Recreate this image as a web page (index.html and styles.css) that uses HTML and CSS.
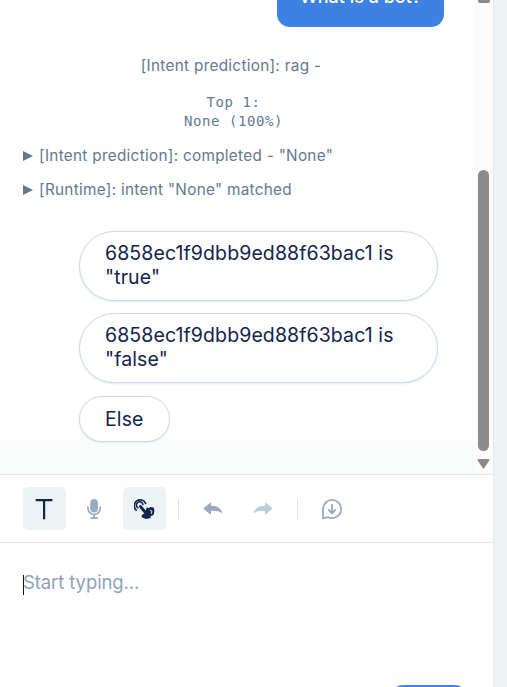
FILE: index.html
```html
<!DOCTYPE html>
<html lang="en">
<head>
  <meta charset="UTF-8">
  <title>Debug Chat</title>
  <link rel="stylesheet" href="styles.css">
</head>
<body>
<div class="panel">
  <div class="chat">
    <div class="messages">
      <div class="bubble">What is a bot?</div>
      <div class="log log-center">[Intent prediction]: rag -</div>
      <pre class="scores">Top 1:
None (100%)</pre>
      <div class="log log-row"><i class="marker"></i><span>[Intent prediction]: completed - "None"</span></div>
      <div class="log log-row"><i class="marker"></i><span>[Runtime]: intent "None" matched</span></div>
      <div class="options">
        <button class="option">6858ec1f9dbb9ed88f63bac1 is<br>"true"</button>
        <button class="option">6858ec1f9dbb9ed88f63bac1 is<br>"false"</button>
        <button class="option option-small">Else</button>
      </div>
    </div>
    <div class="scrollbar">
      <div class="arrow-up"></div>
      <div class="thumb"></div>
      <svg class="arrow-down" width="13" height="10" viewBox="0 0 13 10">
        <path d="M1.5 1h10L6.5 8.5z" fill="#8b8b8b" stroke="#8b8b8b" stroke-width="2" stroke-linejoin="round"/>
      </svg>
    </div>
  </div>

  <div class="toolbar">
    <button class="tool active">
      <svg width="22" height="22" viewBox="0 0 22 22" fill="none" stroke="#14234b" stroke-width="2.2">
        <path d="M2.800 2.100h14.500M10.100 2.100v18" stroke-linecap="square"/>
      </svg>
    </button>
    <button class="tool">
      <svg width="16" height="22" viewBox="0 0 16 22" fill="none" stroke="#9aa9bb" stroke-width="1.7">
        <rect x="3.300" y="1" width="7.600" height="13.600" rx="3.800" fill="#9aa9bb" stroke="none"/>
        <path d="M.9 8.500v1.800a6.200 6.200 0 0 0 12.400 0V8.500M7.100 16.500v3M3.400 20.200h7.500"/>
      </svg>
    </button>
    <button class="tool active">
      <svg width="22" height="22" viewBox="1 0 22 22" fill="none" stroke="#14234b" stroke-width="1.600" stroke-linecap="round">
        <path d="M3.200 12.100A5.900 5.900 0 1 1 12.600 5.400"/>
        <path d="M5 9.900A3.300 3.300 0 1 1 9.900 6.500"/>
        <path d="M6.300 7.500c.8-.8 1.800-.4 2.500.4l4 4.500 1-3.100 2.100.9 1.400-1.100 3.300.3c1 2.300 1 4.900-.2 7.600l-2.800 1.200.2 1.700-5 1-4-1.600-.2-1.800 1.500-1.400 1.300-.6-4.900-5.900c-.5-.8-.6-1.500-.2-2.100z" fill="#14234b" stroke="none"/>
        <path d="M17.200 12.300l1.700.6-.5 2.500" stroke="#edf3f4" stroke-width=".9"/>
      </svg>
    </button>
    <span class="divider"></span>
    <button class="tool">
      <svg width="20" height="14" viewBox="0 0 20 14">
        <path d="M.3 6.400L8 .2v3.600c6.300 0 10.500 2.700 11.500 7.800-3.100-2.400-6.400-3-11.500-2.700v4z" fill="#9aa9bb"/>
      </svg>
    </button>
    <button class="tool">
      <svg width="20" height="14" viewBox="0 0 20 14">
        <path d="M19.700 6.400L12 .2v3.600C5.700 3.800 1.500 6.500.5 11.600 3.600 9.200 6.900 8.600 12 8.900v4z" fill="#bdccdb"/>
      </svg>
    </button>
    <span class="divider divider-last"></span>
    <button class="tool">
      <svg width="22" height="22" viewBox="0 0 22 22" fill="none" stroke="#9aa9bb" stroke-width="1.800">
        <path d="M2 20.200V11a9.100 9.100 0 1 1 9.100 9.100c-1.500 0-2.700-.3-3.900-.9z"/>
        <path d="M11 6v9M7.300 11.500L11 15.200l3.700-3.700"/>
      </svg>
    </button>
  </div>

  <div class="editor">
    <div class="placeholder">Start typing...</div>
    <div class="send"></div>
  </div>
</div>
</body>
</html>
```
FILE: styles.css
```css
:root {
  --navy: #14234b;
  --slate: #65788e;
  --blue: #3d82e2;
  --line: #dfe8ed;
}

* {
  margin: 0;
  padding: 0;
  box-sizing: border-box;
}

body {
  height: 687px;
  overflow: hidden;
  background: #edf3f4;
  font-family: Inter, 'Liberation Sans', sans-serif;
  color: var(--navy);
}

button {
  border: none;
  background: none;
  font: inherit;
  color: inherit;
}

.panel {
  display: flex;
  flex-direction: column;
  width: 494px;
  height: 687px;
  background: #fff;
  border-right: 1px solid #e2eaed;
  overflow: hidden;
}

.chat {
  display: flex;
  flex: none;
  height: 475px;
  border-bottom: 1px solid var(--line);
  background: linear-gradient(#fff 88%, #f7f9fa);
  overflow: hidden;
}

.messages {
  display: flex;
  flex-direction: column;
  flex: 1;
  padding: 0 30px 0 23px;
}

.bubble {
  flex: none;
  align-self: flex-end;
  width: 167px;
  height: 47px;
  margin-top: -20px;
  border-radius: 13px;
  background: var(--blue);
  color: #fff;
  font-size: 18px;
  font-weight: 500;
  line-height: 34px;
  text-align: center;
}

.log {
  font-size: 15.3px;
  line-height: 20px;
  letter-spacing: 0.3px;
  white-space: nowrap;
  color: var(--slate);
}

.log-center {
  margin-top: 29px;
  padding-right: 5px;
  text-align: center;
}

.scores {
  margin: 17px 0 15px;
  font-family: 'DejaVu Sans Mono', monospace;
  font-size: 14px;
  line-height: 19px;
  letter-spacing: 0.55px;
  text-align: center;
  color: var(--slate);
}

.log-row {
  display: flex;
  align-items: center;
  margin-bottom: 14px;
}

.marker {
  width: 10px;
  height: 10px;
  margin-right: 6px;
  background: var(--slate);
  clip-path: polygon(0 0, 100% 50%, 0 100%);
}

.options {
  display: flex;
  flex-direction: column;
  align-items: flex-start;
  gap: 12px;
  margin: 17px -17px 0 56px;
}

.option {
  width: 359px;
  height: 70px;
  padding: 0 25px 2px;
  border: 1px solid #ced9e2;
  border-radius: 35px;
  background: #fff;
  box-shadow: 0 1px 2px rgba(120, 150, 175, 0.2);
  font-size: 19.5px;
  line-height: 24px;
  letter-spacing: 0.1px;
  text-align: left;
  white-space: nowrap;
}

.option-small {
  width: 91px;
  height: 46px;
  margin-top: 1px;
  padding-bottom: 0;
}

.scrollbar {
  display: flex;
  flex-direction: column;
  align-items: center;
  width: 19px;
  background: #fcfcfc;
}

.arrow-up {
  width: 12px;
  height: 3px;
  border-radius: 0 0 2px 2px;
  background: #8b8b8b;
}

.thumb {
  width: 11px;
  height: 281px;
  margin: 167px 0 8px;
  border-radius: 6px;
  background: #8b8b8b;
}

.toolbar {
  display: flex;
  flex: none;
  align-items: center;
  gap: 7px;
  height: 68px;
  padding: 0 23px;
  border-bottom: 1px solid var(--line);
}

.tool {
  display: flex;
  align-items: center;
  justify-content: center;
  width: 43px;
  height: 43px;
  border-radius: 5px;
}

.tool.active {
  background: #edf3f4;
}

.divider {
  width: 1px;
  height: 20px;
  margin: 0 5px;
  background: #dce3ed;
}

.divider-last {
  margin-left: 6px;
}

.editor {
  display: flex;
  flex: 1;
  flex-direction: column;
  justify-content: space-between;
  padding: 28px 32px 0 23px;
}

.placeholder {
  border-left: 1px solid #111;
  height: 20px;
  margin-top: 4px;
  font-size: 18.5px;
  line-height: 15px;
  letter-spacing: -0.1px;
  text-indent: -1px;
  color: #8fa3b8;
}

.send {
  align-self: flex-end;
  width: 64px;
  height: 2px;
  border-radius: 8px 8px 0 0 / 2px 2px 0 0;
  background: var(--blue);
}
```
